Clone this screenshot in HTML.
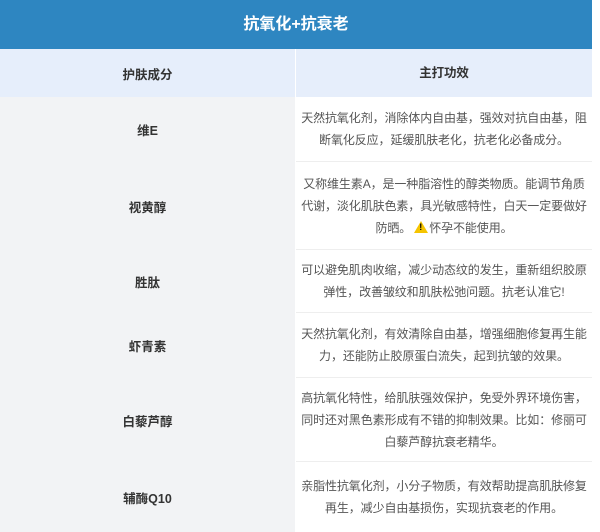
<!DOCTYPE html>
<html><head><meta charset="utf-8"><style>
body{margin:0;background:#fff;font-family:"Liberation Sans","Noto Sans CJK SC",sans-serif;}
.t{position:absolute;left:0;top:0;width:592px;}
.h{height:49px;background:#2e86c1;color:#fff;font-weight:bold;font-size:16px;text-align:center;line-height:49px;}
.row{display:flex;}
.l{width:295px;background:#f2f3f5;display:flex;align-items:center;justify-content:center;font-size:12.5px;font-weight:bold;color:#333;}
.r{width:296px;margin-left:1px;display:flex;align-items:center;justify-content:center;text-align:center;font-size:12px;line-height:22px;color:#555;padding:0 3px;box-sizing:border-box;border-bottom:1px solid #eee;letter-spacing:-0.1px;}
.sh .l,.sh .r{background:#e6eefb;color:#333;font-weight:bold;font-size:12.5px;border:none;}
.w{display:inline-block;width:0;height:0;border-left:7px solid transparent;border-right:7px solid transparent;border-bottom:12px solid #f5c400;position:relative;vertical-align:-1px;margin:0 1px 0 3px;}
.w::after{content:"!";position:absolute;left:-2px;top:1px;font-size:9px;line-height:11px;font-weight:bold;color:#000;}
</style></head><body><div class="t">
<div class="h">抗氧化+抗衰老</div>
<div class="row sh" style="height:48px"><div class="l">护肤成分</div><div class="r">主打功效</div></div>
<div class="row" style="height:65px"><div class="l">维E</div><div class="r">天然抗氧化剂，消除体内自由基，强效对抗自由基，阻断氧化反应，延缓肌肤老化，抗老化必备成分。</div></div>
<div class="row" style="height:88px"><div class="l">视黄醇</div><div class="r"><div>又称维生素A，是一种脂溶性的醇类物质。能调节角质代谢，淡化肌肤色素，具光敏感特性，白天一定要做好防晒。<span class="w"></span>怀孕不能使用。</div></div></div>
<div class="row" style="height:63px"><div class="l">胜肽</div><div class="r">可以避免肌肉收缩，减少动态纹的发生，重新组织胶原弹性，改善皱纹和肌肤松弛问题。抗老认准它!</div></div>
<div class="row" style="height:65px"><div class="l">虾青素</div><div class="r">天然抗氧化剂，有效清除自由基，增强细胞修复再生能力，还能防止胶原蛋白流失，起到抗皱的效果。</div></div>
<div class="row" style="height:84px"><div class="l">白藜芦醇</div><div class="r">高抗氧化特性，给肌肤强效保护，免受外界环境伤害，同时还对黑色素形成有不错的抑制效果。比如：修丽可白藜芦醇抗衰老精华。</div></div>
<div class="row" style="height:70px"><div class="l">辅酶Q10</div><div class="r" style="border:none">亲脂性抗氧化剂，小分子物质，有效帮助提高肌肤修复再生，减少自由基损伤，实现抗衰老的作用。</div></div>
</div></body></html>
